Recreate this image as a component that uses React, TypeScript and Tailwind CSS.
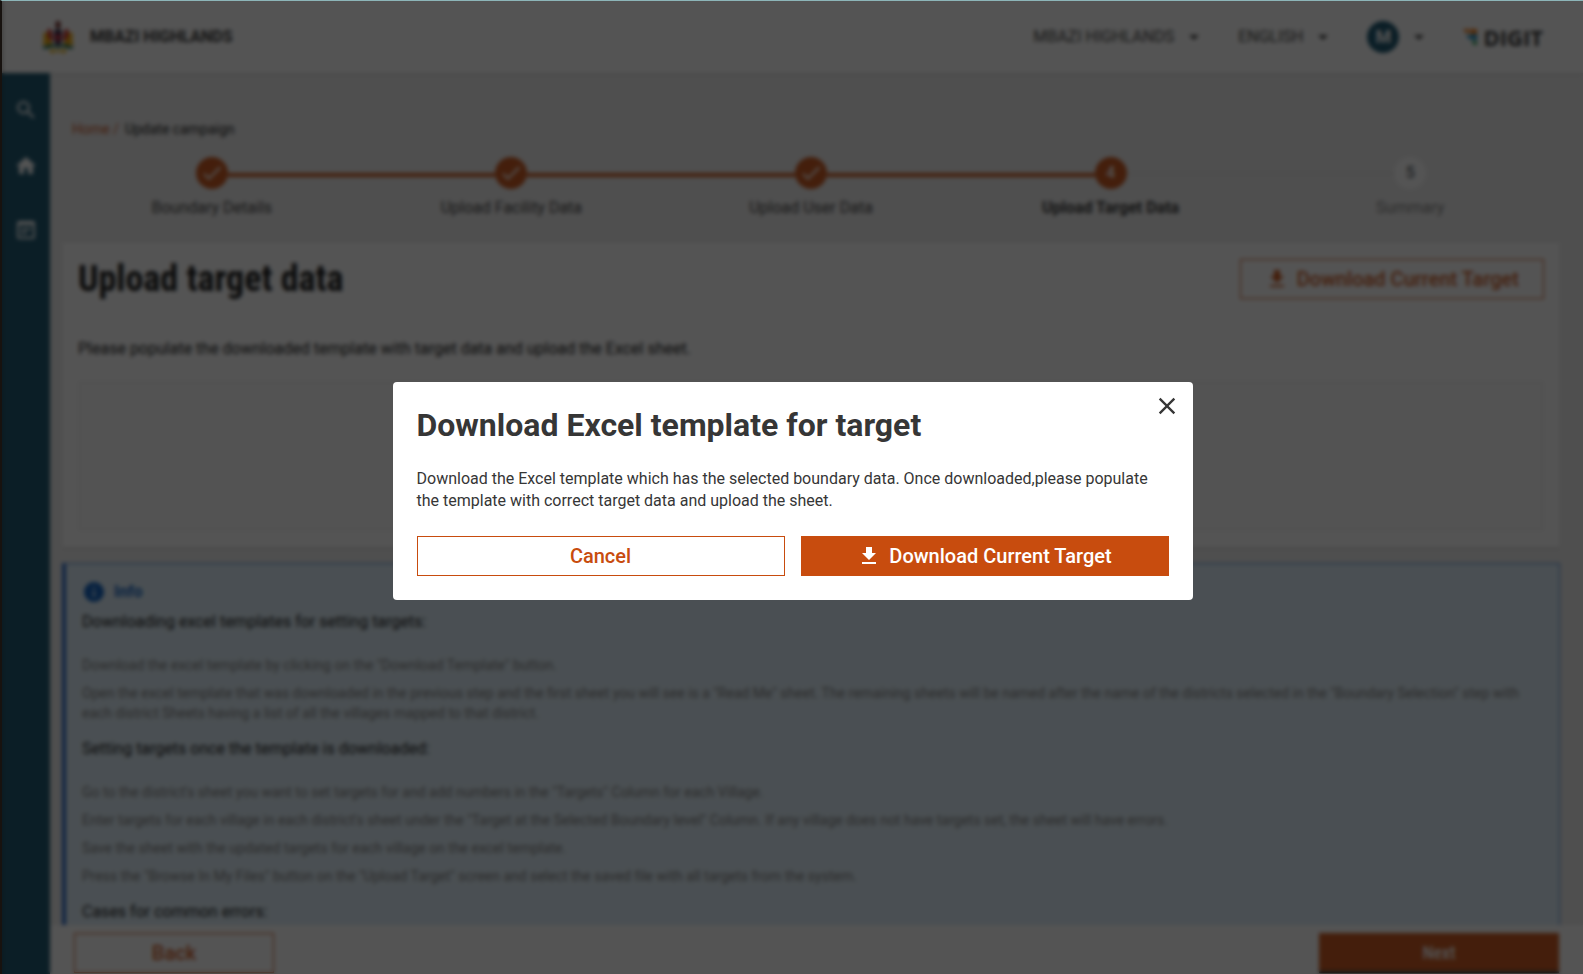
import type { FC, ReactNode } from "react";
import { MdArrowDropDown, MdCheck, MdClose, MdHome, MdInfo, MdSearch, MdWysiwyg } from "react-icons/md";

const STEPS = [
  "Boundary Details",
  "Upload Facility Data",
  "Upload User Data",
  "Upload Target Data",
  "Summary",
];
const CURRENT_STEP = 3;

const INFO_SECTIONS = [
  {
    title: "Downloading excel templates for setting targets:",
    items: [
      'Download the excel template by clicking on the "Download Template" button.',
      'Open the excel template that was downloaded in the previous step and the first sheet you will see is a "Read Me" sheet. The remaining sheets will be named after the name of the districts selected in the "Boundary Selection" step with each district Sheets having a list of all the villages mapped to that district.',
    ],
  },
  {
    title: "Setting targets once the template is downloaded:",
    items: [
      'Go to the district\'s sheet you want to set targets for and add numbers in the "Targets" Column for each Village.',
      'Enter targets for each village in each district\'s sheet under the "Target at the Selected Boundary level" Column. If any village does not have targets set, the sheet will have errors.',
      "Save the sheet with the updated targets for each village on the excel template.",
      'Press the "Browse In My Files" button on the "Upload Target" screen and select the saved file with all targets from the system.',
    ],
  },
  { title: "Cases for common errors:", items: [] },
];

const DownloadIcon: FC = () => (
  <svg width="24" height="24" viewBox="0 0 24 24" fill="currentColor" aria-hidden="true">
    <path d="M19 9h-4V3H9v6H5l7 7 7-7zM5 18v2h14v-2H5z" />
  </svg>
);

const Emblem: FC = () => (
  <svg width="32" height="34" viewBox="0 0 32 34" aria-hidden="true">
    <path d="M14 1h4v2l1 1-1 4h-4l-1-4 1-1z" fill="#6b1d1a" />
    <path d="M15 8h2v3h-2z" fill="#2b2018" />
    <path d="M12 10h8v8c0 4-1 6-4 8-3-2-4-4-4-8z" fill="#1d1238" />
    <path d="M13 14h6v3c0 3-1 4-3 5-2-1-3-2-3-5z" fill="#b01c30" />
    <path d="M6 9c2-1 4 1 4 4l1 6-2 3-2-3-2-5z" fill="#c4160f" />
    <path d="M26 9c-2-1-4 1-4 4l-1 6 2 3 2-3 2-5z" fill="#c4160f" />
    <path d="M2 12l3 1 2 6 3 3 1 3H3l-3-1 2-4-1-4z" fill="#f0a800" />
    <path d="M30 12l-3 1-2 6-3 3-1 3h8l3-1-2-4 1-4z" fill="#f0a800" />
    <path d="M0 27c4-1 7-3 10-3l6 2 6-2c3 0 6 2 10 3l-2 2c-4 0-7-2-9-2l-5 1-5-1c-2 0-5 2-9 2z" fill="#0f5f3c" />
    <path d="M7 30l4-1 2 2-3 3zM25 30l-4-1-2 2 3 3zM13 30h6v2h-6z" fill="#f0b400" />
  </svg>
);

const DigitLogo: FC = () => (
  <div className="flex items-center gap-1">
    <svg width="16" height="18" viewBox="0 0 16 18" aria-hidden="true">
      <path d="M0 1h6v4H3zM7 1h7v5H7z" fill="#f47000" />
      <path d="M3 7h7v4H6z" fill="#0b83bd" />
      <path d="M10 6h4v6h-4z" fill="#0b83bd" />
      <path d="M8 13h6v4h-3z" fill="#1f9b4c" />
    </svg>
    <span className="font-['Open_Sans',sans-serif] text-[22px] font-bold leading-5 text-[#282828]">
      DIGIT
    </span>
  </div>
);

const HeaderMenu: FC<{ label: string; children: ReactNode }> = ({ label, children }) => (
  <button type="button" aria-label={label} className="flex items-center gap-2 text-[#363636]">
    {children}
    <MdArrowDropDown size={24} />
  </button>
);

const Header: FC = () => (
  <header className="z-10 flex h-18 shrink-0 items-center justify-between bg-white px-10 shadow-sm">
    <div className="flex items-center gap-4">
      <Emblem />
      <span className="font-bold text-[#282828]">MBAZI HIGHLANDS</span>
    </div>
    <div className="flex items-center gap-8">
      <HeaderMenu label="City">MBAZI HIGHLANDS</HeaderMenu>
      <HeaderMenu label="Language">ENGLISH</HeaderMenu>
      <HeaderMenu label="Profile">
        <span className="flex size-8 items-center justify-center rounded-full bg-[#0b4b66] text-lg font-bold text-white">
          M
        </span>
      </HeaderMenu>
      <DigitLogo />
    </div>
  </header>
);

const Sidebar: FC = () => (
  <nav className="flex w-12 shrink-0 flex-col items-center gap-8 bg-[#0b4b66] pt-[25px] text-white">
    <a href="#search" aria-label="Search">
      <MdSearch size={24} />
    </a>
    <a href="#home" aria-label="Home">
      <MdHome size={24} />
    </a>
    <a href="#campaigns" aria-label="Campaigns" className="mt-2">
      <MdWysiwyg size={24} />
    </a>
  </nav>
);

const Stepper: FC = () => (
  <ol className="grid grid-cols-5">
    {STEPS.map((step, i) => {
      const reached = i <= CURRENT_STEP;
      return (
        <li key={step} className="flex flex-col items-center gap-[7px]">
          <div className="flex w-full items-center">
            <span
              className={`flex-1 ${i === 0 ? "" : reached ? "mt-1 h-1 bg-[#c84c0e]" : "h-px bg-[#d6d5d4]"}`}
            />
            <span
              className={`flex size-8 items-center justify-center rounded-full font-medium ${
                reached ? "bg-[#c84c0e] text-white" : "bg-white text-[#505a5f]"
              }`}
            >
              {i < CURRENT_STEP ? <MdCheck size={24} /> : i + 1}
            </span>
            <span
              className={`flex-1 ${
                i === STEPS.length - 1
                  ? ""
                  : i < CURRENT_STEP
                    ? "mt-1 h-1 bg-[#c84c0e]"
                    : "h-px bg-[#d6d5d4]"
              }`}
            />
          </div>
          <span
            className={
              i === CURRENT_STEP
                ? "font-bold text-[#282828]"
                : reached
                  ? "text-[#363636]"
                  : "text-[#787878]"
            }
          >
            {step}
          </span>
        </li>
      );
    })}
  </ol>
);

const UploadCard: FC = () => (
  <section className="flex flex-col bg-white p-4 shadow-sm">
    <div className="flex items-start justify-between">
      <h1 className="font-['Roboto_Condensed',Roboto,sans-serif] text-4xl leading-10 font-bold text-[#0b0c0c]">
        Upload target data
      </h1>
      <button
        type="button"
        className="flex h-10 items-center gap-2 border border-[#c84c0e] px-6 text-xl font-medium text-[#c84c0e]"
      >
        <DownloadIcon />
        Download Current Target
      </button>
    </div>
    <p className="mt-[38px] text-[#0b0c0c]">
      Please populate the downloaded template with target data and upload the Excel sheet.
    </p>
    <div className="mt-5 h-[150px] border border-[#eeeeee] bg-[#fafafa]" />
  </section>
);

const InfoCard: FC = () => (
  <section className="flex flex-col border border-l-4 border-[#3a7bd5] border-l-[#1d5fc4] bg-[#deeffa] p-4">
    <h2 className="flex items-center gap-2 font-bold text-[#0057bd]">
      <MdInfo size={24} />
      Info
    </h2>
    {INFO_SECTIONS.map(({ title, items }) => (
      <div key={title} className="mb-2">
        <h3 className="mt-1.5 mb-[21px] text-[#0b0c0c]">{title}</h3>
        <div className="flex flex-col gap-2 text-sm text-[#787878]">
          {items.map((item) => (
            <p key={item}>{item}</p>
          ))}
        </div>
      </div>
    ))}
  </section>
);

const Footer: FC = () => (
  <footer className="z-10 flex h-[49px] shrink-0 justify-between bg-white px-6 pt-2 shadow-sm">
    <button
      type="button"
      className="h-10 w-50 border border-[#c84c0e] text-xl font-medium text-[#c84c0e]"
    >
      Back
    </button>
    <button
      type="button"
      className="h-10 w-60 bg-[#c84c0e] font-['Roboto_Condensed',Roboto,sans-serif] text-lg font-medium text-white shadow-[inset_0_-2px_0_#0b0c0c]"
    >
      Next
    </button>
  </footer>
);

const DownloadDialog: FC = () => (
  <div
    role="dialog"
    aria-modal="true"
    aria-labelledby="dialog-title"
    className="relative flex w-full max-w-[800px] flex-col gap-6 rounded-sm bg-white p-6 text-[#363636]"
  >
    <h2 id="dialog-title" className="text-[32px] leading-[38px] font-bold">
      Download Excel template for target
    </h2>
    <button type="button" aria-label="Close" className="absolute top-2.5 right-3">
      <MdClose size={28} />
    </button>
    <p className="leading-[22px]">
      Download the Excel template which has the selected boundary data. Once downloaded,please
      populate the template with correct target data and upload the sheet.
    </p>
    <div className="grid grid-cols-2 gap-4 text-xl font-medium">
      <button type="button" className="h-10 border border-[#c84c0e] text-[#c84c0e]">
        Cancel
      </button>
      <button
        type="button"
        className="flex h-10 items-center justify-center gap-2 bg-[#c84c0e] text-white"
      >
        <DownloadIcon />
        Download Current Target
      </button>
    </div>
  </div>
);

const App: FC = () => {
  return (
    <div className="relative flex h-screen flex-col overflow-hidden border-t border-l-2 border-t-[#8cb5b8] border-l-[#17120f] bg-[#eeeeee] font-[Roboto,sans-serif] text-base">
      <Header />
      <div className="flex min-h-0 flex-1">
        <Sidebar />
        <div className="flex min-w-0 flex-1 flex-col">
          <main className="flex min-h-0 flex-1 flex-col overflow-hidden pr-[23px] pl-3">
            <div className="flex shrink-0 flex-col">
              <nav aria-label="Breadcrumb" className="mt-[46px] flex gap-1.5 pl-2.5 text-sm">
                <a href="#home" className="text-[#c84c0e]">
                  Home /
                </a>
                <span className="text-[#0b0c0c]">Update campaign</span>
              </nav>
              <div className="mt-[18px] mb-[23px]">
                <Stepper />
              </div>
              <UploadCard />
              <div className="mt-4">
                <InfoCard />
              </div>
            </div>
          </main>
          <Footer />
        </div>
      </div>
      <div className="absolute inset-0 z-20 flex items-center justify-center bg-[#0b0c0c]/70 pt-1.5 backdrop-blur-[2px]">
        <DownloadDialog />
      </div>
    </div>
  );
};

export default App;
